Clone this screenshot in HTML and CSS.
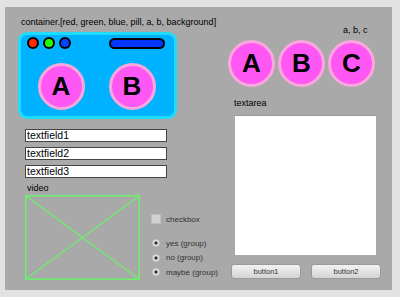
FILE: index.html
```html
<!DOCTYPE html>
<html lang="en">
<head>
  <meta charset="UTF-8" />
  <title>Widgets</title>
  <link rel="stylesheet" href="styles.css">
</head>
<body>
  <div class="panel">
    <div class="left">
      <div class="title">container.[red, green, blue, pill, a, b, background]</div>
      <div class="box">
        <div class="box-top">
          <div class="dots">
            <span class="dot red"></span>
            <span class="dot green"></span>
            <span class="dot blue"></span>
          </div>
          <span class="pill"></span>
        </div>
        <div class="balls">
          <div class="ball">A</div>
          <div class="ball">B</div>
        </div>
      </div>
      <div class="fields">
        <div class="field">textfield1</div>
        <div class="field">textfield2</div>
        <div class="field">textfield3</div>
      </div>
      <div class="label video-label">video</div>
      <div class="video-row">
        <svg class="video" width="115" height="85" viewBox="0 0 115 85">
          <rect x="0.75" y="0.75" width="113.5" height="83.5" fill="none" stroke="#6cf06c" stroke-width="1.5" />
          <line x1="1" y1="1" x2="114" y2="84" stroke="#6cf06c" stroke-width="1.3" />
          <line x1="114" y1="1" x2="1" y2="84" stroke="#6cf06c" stroke-width="1.3" />
        </svg>
        <div class="options">
          <div class="opt check-opt"><span class="check"></span>checkbox</div>
          <div class="radios">
            <div class="opt"><span class="radio"></span>yes (group)</div>
            <div class="opt"><span class="radio"></span>no (group)</div>
            <div class="opt"><span class="radio"></span>maybe (group)</div>
          </div>
        </div>
      </div>
    </div>
    <div class="right">
      <div class="abc-label">a, b, c</div>
      <div class="balls-row">
        <div class="ball">A</div>
        <div class="ball">B</div>
        <div class="ball">C</div>
      </div>
      <div class="label textarea-label">textarea</div>
      <div class="textarea"></div>
      <div class="buttons">
        <div class="button">button1</div>
        <div class="button">button2</div>
      </div>
    </div>
  </div>
</body>
</html>
```

FILE: styles.css
```css
body {
  margin: 0;
  background: #e2e2e2;
  font-family: 'Liberation Sans', Arial, sans-serif;
  color: #000;
}

.panel {
  margin: 7px 8px 0 5px;
  height: 283px;
  background: #a9a9a9;
  display: flex;
}

.left {
  width: 223px;
  padding-left: 13px;
  box-sizing: border-box;
}

.title {
  font-size: 9px;
  line-height: 11px;
  margin: 10px 0 0 3px;
  white-space: nowrap;
}

.box {
  margin-top: 4px;
  width: 159px;
  height: 87px;
  box-sizing: border-box;
  border: 3px solid #1fdcff;
  border-radius: 9px;
  background: #00b2ff;
  padding: 2px 6px 0 6px;
}

.box-top {
  display: flex;
  justify-content: space-between;
  align-items: center;
  padding-right: 3px;
}

.dots {
  display: flex;
  gap: 4px;
}

.dot {
  width: 12px;
  height: 12px;
  box-sizing: border-box;
  border: 2px solid #000;
  border-radius: 50%;
}

.red { background: #ff2a00; }
.green { background: #1eff00; }
.blue { background: #0044ff; }

.pill {
  width: 56px;
  height: 11px;
  box-sizing: border-box;
  border: 2px solid #000;
  border-radius: 6px;
  background: #0036ff;
}

.balls {
  display: flex;
  justify-content: center;
  gap: 24px;
  margin-top: 14px;
  padding-right: 2px;
}

.ball {
  width: 47px;
  height: 47px;
  box-sizing: border-box;
  border: 3px solid #f8a8dc;
  border-radius: 50%;
  background: #ff57f4;
  display: flex;
  align-items: center;
  justify-content: center;
  font-size: 26px;
  font-weight: bold;
  color: #000;
}

.fields {
  margin: 10px 0 0 7px;
  display: flex;
  flex-direction: column;
  gap: 5px;
}

.field {
  width: 142px;
  height: 13px;
  box-sizing: border-box;
  border: 1px solid #444;
  background: #fff;
  font-size: 10.5px;
  line-height: 11px;
  padding-left: 1px;
}

.label {
  font-size: 9px;
  line-height: 11px;
}

.video-label {
  margin: 5px 0 0 9px;
}

.video-row {
  display: flex;
  margin: 0 0 0 7px;
  padding-top: 1px;
}

.video {
  display: block;
}

.options {
  margin-left: 11px;
  padding-top: 19px;
  font-size: 8px;
  color: #333;
}

.opt {
  display: flex;
  align-items: center;
  gap: 5px;
  height: 10px;
  white-space: nowrap;
}

.check {
  width: 10px;
  height: 10px;
  box-sizing: border-box;
  background: #d2d2d2;
  border: 1px solid #bdbdbd;
}

.radios {
  margin-top: 14px;
  display: flex;
  flex-direction: column;
  gap: 4.5px;
}

.radio {
  width: 8px;
  height: 8px;
  margin: 0 1px 0 1px;
  box-sizing: border-box;
  border-radius: 50%;
  background: radial-gradient(circle, #333 0 1.4px, #e6e6e6 1.8px);
  border: 1px solid #c8c8c8;
}

.right {
  flex: 1;
  display: flex;
  flex-direction: column;
}

.abc-label {
  font-size: 9px;
  line-height: 11px;
  margin: 18px 0 0 115px;
}

.balls-row {
  display: flex;
  gap: 3px;
  margin-top: 4px;
}

.textarea-label {
  margin: 11px 0 0 6px;
}

.textarea {
  margin: 6px 0 0 7px;
  width: 141px;
  height: 140px;
  background: #fff;
  border-top: 1px solid #999;
  box-sizing: border-box;
}

.buttons {
  display: flex;
  gap: 10px;
  margin: 9px 0 0 3px;
}

.button {
  width: 70px;
  height: 15px;
  box-sizing: border-box;
  border: 1px solid #999;
  border-radius: 3px;
  background: linear-gradient(#f2f2f2, #d4d4d4);
  font-size: 7.5px;
  line-height: 13px;
  text-align: center;
  color: #333;
}
```
